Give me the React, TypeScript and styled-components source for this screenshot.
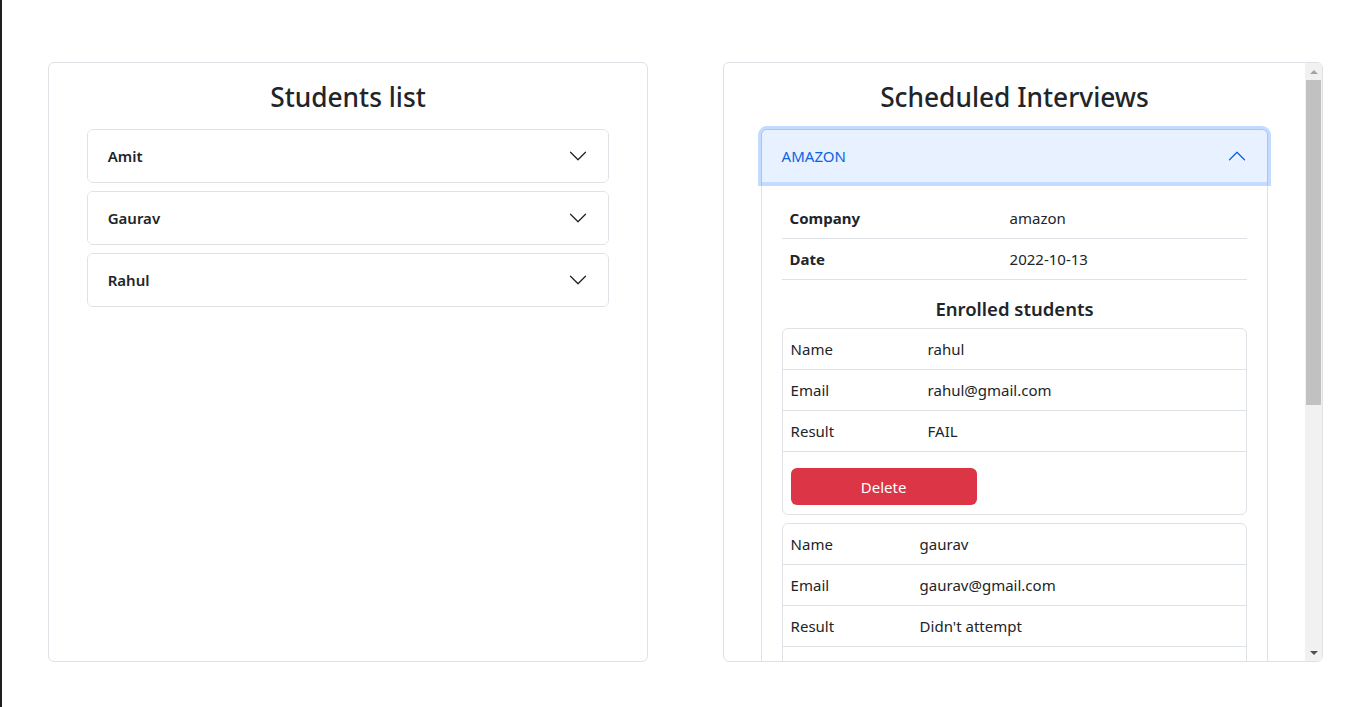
import React from 'react';
import styled, { createGlobalStyle } from 'styled-components';

const GlobalStyle = createGlobalStyle`
    *, *::before, *::after {
        box-sizing: border-box;
    }
    html, body {
        margin: 0;
        padding: 0;
        background: #fff;
    }
    body {
        font-family: "Noto Sans", "Open Sans", sans-serif;
        font-size: 15px;
        line-height: 24px;
        color: #212529;
    }
`;

interface Student {
    name: string;
    email: string;
    result: string;
}

interface Interview {
    company: string;
    date: string;
    students: Student[];
    labelWidth: number[];
    open: boolean;
}

const students = ['Amit', 'Gaurav', 'Rahul'];

const interviews: Interview[] = [
    {
        company: 'amazon',
        date: '2022-10-13',
        open: true,
        labelWidth: [137, 129, 137],
        students: [
            { name: 'rahul', email: 'rahul@gmail.com', result: 'FAIL' },
            { name: 'gaurav', email: 'gaurav@gmail.com', result: "Didn't attempt" },
            { name: 'amit', email: 'amit@gmail.com', result: 'PASS' },
        ],
    },
    {
        company: 'google',
        date: '2022-10-20',
        open: false,
        labelWidth: [],
        students: [],
    },
];

const Chevron: React.FC<{ up?: boolean }> = ({ up }) => (
    <ChevronIcon $up={up} viewBox="0 0 16 16" fill="currentColor">
        <path
            fillRule="evenodd"
            d="M1.646 4.646a.5.5 0 0 1 .708 0L8 10.293l5.646-5.647a.5.5 0 0 1 .708.708l-6 6a.5.5 0 0 1-.708 0l-6-6a.5.5 0 0 1 0-.708z"
        />
    </ChevronIcon>
);

const StudentCard: React.FC<{ student: Student; labelWidth: number }> = ({ student, labelWidth }) => (
    <CardBox>
        <InfoTable>
            <tbody>
                <tr>
                    <Cell style={{ width: labelWidth }}>Name</Cell>
                    <Cell>{student.name}</Cell>
                </tr>
                <tr>
                    <Cell>Email</Cell>
                    <Cell>{student.email}</Cell>
                </tr>
                <tr>
                    <Cell>Result</Cell>
                    <Cell>{student.result}</Cell>
                </tr>
                <tr>
                    <ActionCell colSpan={2}>
                        <DeleteButton type="button">Delete</DeleteButton>
                    </ActionCell>
                </tr>
            </tbody>
        </InfoTable>
    </CardBox>
);

const App: React.FC = () => {
    return (
        <>
            <GlobalStyle />
            <Page>
                <Panel>
                    <ScrollArea>
                        <Title>Students list</Title>
                        <Accordion>
                            {students.map((name) => (
                                <Item key={name}>
                                    <Header type="button">
                                        <StudentName>{name}</StudentName>
                                        <Chevron />
                                    </Header>
                                </Item>
                            ))}
                        </Accordion>
                    </ScrollArea>
                </Panel>

                <Panel>
                    <ScrollArea>
                        <Title>Scheduled Interviews</Title>
                        <Accordion>
                            {interviews.map((iv) => (
                                <Item key={iv.company}>
                                    <Header type="button" $open={iv.open}>
                                        <span>{iv.company.toUpperCase()}</span>
                                        <Chevron up={iv.open} />
                                    </Header>
                                    {iv.open && (
                                        <Body>
                                            <DetailsTable>
                                                <tbody>
                                                    <tr>
                                                        <DetailLabel>Company</DetailLabel>
                                                        <DetailValue>{iv.company}</DetailValue>
                                                    </tr>
                                                    <tr>
                                                        <DetailLabel>Date</DetailLabel>
                                                        <DetailValue>{iv.date}</DetailValue>
                                                    </tr>
                                                </tbody>
                                            </DetailsTable>
                                            <SubTitle>Enrolled students</SubTitle>
                                            {iv.students.map((s, i) => (
                                                <StudentCard key={s.email} student={s} labelWidth={iv.labelWidth[i]} />
                                            ))}
                                        </Body>
                                    )}
                                </Item>
                            ))}
                        </Accordion>
                    </ScrollArea>
                    <ScrollBar>
                        <Arrow $dir="up" />
                        <Track>
                            <Thumb />
                        </Track>
                        <Arrow $dir="down" />
                    </ScrollBar>
                </Panel>
            </Page>
        </>
    );
};

const Page = styled.div`
    display: flex;
    align-items: flex-start;
    gap: 75px;
    min-height: 100vh;
    padding: 62px 0 0 46px;
    border-left: 2px solid #1f1f1f;
`;

const Panel = styled.section`
    width: 600px;
    height: 600px;
    flex-shrink: 0;
    display: flex;
    border: 1px solid #dee2e6;
    border-radius: 6px;
    background: #fff;
    overflow: hidden;
`;

const ScrollArea = styled.div`
    flex: 1;
    min-width: 0;
    padding: 17px 0 16px;
    overflow-y: auto;
    scrollbar-width: none;

    &::-webkit-scrollbar {
        display: none;
    }
`;

const ScrollBar = styled.div`
    width: 17px;
    flex-shrink: 0;
    display: flex;
    flex-direction: column;
    background: #f1f1f1;
`;

const Arrow = styled.div<{ $dir: 'up' | 'down' }>`
    height: 17px;
    flex-shrink: 0;
    display: flex;
    align-items: center;
    justify-content: center;

    &::after {
        content: '';
        width: 0;
        height: 0;
        border-left: 4px solid transparent;
        border-right: 4px solid transparent;
        ${(p) =>
            p.$dir === 'up'
                ? 'border-bottom: 4px solid #a3a3a3;'
                : 'border-top: 4px solid #505050;'}
    }
`;

const Track = styled.div`
    flex: 1;
    padding: 0 1px 0 1px;
`;

const Thumb = styled.div`
    height: 325px;
    background: #c1c1c1;
`;

const Title = styled.h3`
    margin: 0 0 15px;
    font-size: 26.3px;
    font-weight: 500;
    line-height: 34px;
    text-align: center;
`;

const Accordion = styled.div`
    width: 87.4%;
    margin: 0 auto;
    display: flex;
    flex-direction: column;
    gap: 8px;
`;

const Item = styled.div`
    border: 1px solid #dee2e6;
    border-radius: 6px;
    background: #fff;
`;

const Header = styled.button<{ $open?: boolean }>`
    position: relative;
    z-index: 1;
    width: 100%;
    height: 52px;
    padding: 0 20px;
    display: flex;
    align-items: center;
    justify-content: space-between;
    border: 0;
    border-radius: ${(p) => (p.$open ? '5px 5px 0 0' : '5px')};
    font: inherit;
    text-align: left;
    color: ${(p) => (p.$open ? '#0c63e4' : '#212529')};
    background: ${(p) => (p.$open ? '#e7f1ff' : '#fff')};
    box-shadow: ${(p) => (p.$open ? '0 0 0 4px rgba(13, 110, 253, 0.25)' : 'none')};
    cursor: pointer;
`;

const StudentName = styled.span`
    font-weight: 600;
`;

const ChevronIcon = styled.svg<{ $up?: boolean }>`
    width: 20px;
    height: 20px;
    flex-shrink: 0;
    transform: ${(p) => (p.$up ? 'rotate(180deg)' : 'none')};
`;

const Body = styled.div`
    padding: 16px 20px 16px;
`;

const DetailsTable = styled.table`
    width: 100%;
    margin-bottom: 17px;
    border-collapse: collapse;
`;

const DetailLabel = styled.th`
    width: 220px;
    padding: 8px;
    text-align: left;
    font-weight: 700;
    border-bottom: 1px solid #dee2e6;
`;

const DetailValue = styled.td`
    padding: 8px;
    border-bottom: 1px solid #dee2e6;
`;

const SubTitle = styled.h5`
    margin: 0 0 7px;
    font-size: 18.5px;
    font-weight: 600;
    line-height: 24px;
    text-align: center;
`;

const CardBox = styled.div`
    margin-bottom: 8px;
    border: 1px solid #dee2e6;
    border-radius: 6px;
    overflow: hidden;
`;

const InfoTable = styled.table`
    width: 100%;
    border-collapse: collapse;
`;

const Cell = styled.td`
    padding: 8px;
    border-bottom: 1px solid #dee2e6;
`;

const ActionCell = styled.td`
    padding: 16px 8px 9px;
`;

const DeleteButton = styled.button`
    display: block;
    width: 186px;
    height: 37px;
    border: 0;
    border-radius: 6px;
    background: #dc3545;
    color: #fff;
    font: inherit;
    cursor: pointer;
`;

export default App;
